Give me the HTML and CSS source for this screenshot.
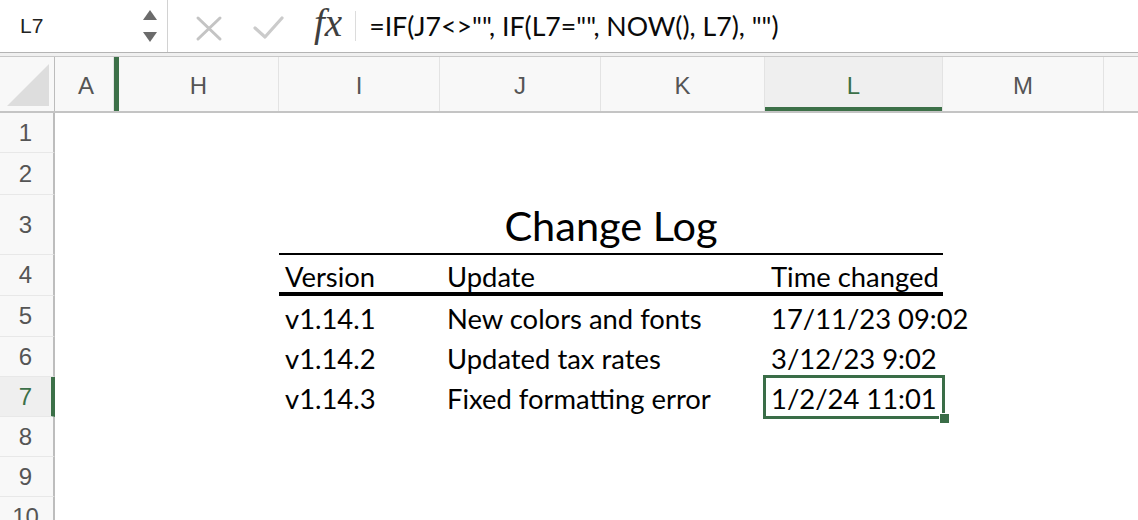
FILE: index.html
```html
<!DOCTYPE html>
<html>
<head>
<meta charset="utf-8">
<link rel="stylesheet" href="styles.css">
</head>
<body>
<div class="app">
  <div class="fbar">
    <div class="namebox">
      <span class="ref">L7</span>
      <svg class="spin" width="16" height="36" viewBox="0 0 16 36">
        <polygon points="1,12 8,2 15,12" fill="#6b6b6b"/>
        <polygon points="1,24 15,24 8,34" fill="#6b6b6b"/>
      </svg>
    </div>
    <svg class="btns" width="132" height="52" viewBox="0 0 132 52">
      <path d="M30 18 L52 39 M52 18 L30 39" stroke="#c4c4c4" stroke-width="3" fill="none" stroke-linecap="round"/>
      <path d="M87 28 L97 37 L114 18" stroke="#cbcbcb" stroke-width="3.2" fill="none" stroke-linecap="round" stroke-linejoin="round"/>
    </svg>
    <span class="fx">fx</span>
    <span class="sep"></span>
    <div class="formula">=IF(J7&lt;&gt;"", IF(L7="", NOW(), L7), "")</div>
  </div>
  <div class="fgap"></div>
  <div class="grid colhead">
    <div class="corner"><span class="tri"></span></div>
    <div class="ch">A</div>
    <div class="hidmark"></div>
    <div class="ch">H</div>
    <div class="ch">I</div>
    <div class="ch">J</div>
    <div class="ch">K</div>
    <div class="ch sel">L</div>
    <div class="ch">M</div>
    <div class="ch last"></div>
  </div>
  <div class="sheet">
    <div class="grid row h40"><div class="rh">1</div></div>
    <div class="grid row h42"><div class="rh">2</div></div>
    <div class="grid row h60"><div class="rh">3</div><div class="title">Change Log</div></div>
    <div class="grid row h41">
      <div class="rh">4</div>
      <div class="cell hd ci">Version</div>
      <div class="cell hd cj">Update</div>
      <div class="cell hd ck"></div>
      <div class="cell hd cl">Time changed</div>
    </div>
    <div class="grid row h41">
      <div class="rh">5</div>
      <div class="cell ci">v1.14.1</div>
      <div class="cell cj">New colors and fonts</div>
      <div class="cell cl">17/11/23 09:02</div>
    </div>
    <div class="grid row h40">
      <div class="rh">6</div>
      <div class="cell ci">v1.14.2</div>
      <div class="cell cj">Updated tax rates</div>
      <div class="cell cl">3/12/23 9:02</div>
    </div>
    <div class="grid row h40">
      <div class="rh selr">7</div>
      <div class="cell ci">v1.14.3</div>
      <div class="cell cj">Fixed formatting error</div>
      <div class="cell cl active">1/2/24 11:01<span class="handle"></span></div>
    </div>
    <div class="grid row h40"><div class="rh">8</div></div>
    <div class="grid row h40"><div class="rh">9</div></div>
    <div class="grid row h40"><div class="rh">10</div></div>
  </div>
</div>
</body>
</html>
```
FILE: styles.css
```css
html, body {
  margin: 0;
  padding: 0;
  background: #ffffff;
}
body {
  font-family: "Liberation Sans", Arial, sans-serif;
}
.app {
  width: 1138px;
  height: 520px;
  overflow: hidden;
  background: #ffffff;
}
.fbar {
  display: flex;
  align-items: center;
  height: 52px;
  border-bottom: 1px solid #b4b4b4;
}
.namebox {
  box-sizing: border-box;
  width: 168px;
  height: 52px;
  border-right: 1px solid #d2d2d2;
  display: flex;
  align-items: center;
  justify-content: space-between;
  padding-left: 20px;
  padding-right: 9px;
}
.ref {
  font-size: 21px;
  color: #222222;
}
.spin {
  display: block;
}
.btns {
  display: block;
  flex: none;
}
.fx {
  font-family: "Liberation Serif", "Times New Roman", serif;
  font-style: italic;
  font-size: 39px;
  color: #3f3f3f;
  margin-left: 14px;
  line-height: 1;
  margin-top: -7px;
}
.sep {
  width: 1px;
  height: 30px;
  background: #dcdcdc;
  margin-left: 13px;
}
.formula {
  margin-left: 13px;
  font-family: Lato, "Open Sans", sans-serif;
  font-size: 26.7px;
  color: #0a0a0a;
  white-space: nowrap;
}
.fgap {
  height: 3px;
  background: #f0f0f0;
}
.grid {
  display: grid;
  grid-template-columns: 55px 59px 5px 160px 161px 161px 164px 178px 161px 1fr;
}
.colhead {
  height: 54px;
  border-top: 1px solid #c8c8c8;
  border-bottom: 2px solid #c4c4c4;
  background: #f8f8f8;
}
.corner {
  border-right: 1px solid #bcbcbc;
  position: relative;
}
.tri {
  position: absolute;
  right: 5px;
  bottom: 5px;
  width: 42px;
  height: 42px;
  background: #dddddd;
  clip-path: polygon(100% 0, 100% 100%, 0 100%);
}
.ch {
  display: flex;
  align-items: center;
  justify-content: center;
  border-right: 1px solid #e3e3e3;
  font-size: 24px;
  color: #555555;
  padding-top: 4px;
}
.ch:nth-child(2) {
  padding-left: 4px;
}
.ch.last {
  border-right: none;
}
.ch.sel {
  background: #efefef;
  color: #3c7048;
  box-shadow: inset 0 -4px 0 #3c7048;
}
.hidmark {
  background: #3c7048;
}
.row {
  box-sizing: border-box;
}
.h40 { height: 40px; }
.h41 { height: 41px; }
.h42 { height: 42px; }
.h60 { height: 60px; }
.rh {
  grid-column: 1;
  display: flex;
  align-items: center;
  justify-content: center;
  background: #f8f8f8;
  border-right: 2px solid #bdbdbd;
  border-bottom: 1px solid #e8e8e8;
  font-size: 24px;
  color: #555555;
  padding-right: 2px;
}
.rh.selr {
  background: #efefef;
  color: #3c7048;
  border-right: 4px solid #3c7048;
  padding-right: 0;
}
.title {
  grid-column: 5 / 9;
  border-bottom: 2px solid #000000;
  text-align: center;
  font-family: Lato, "Open Sans", sans-serif;
  font-size: 41.5px;
  color: #000000;
  display: flex;
  align-items: flex-end;
  justify-content: center;
  line-height: 1;
  padding-bottom: 7px;
}
.cell {
  font-family: Lato, "Open Sans", sans-serif;
  font-size: 27.4px;
  color: #000000;
  white-space: nowrap;
  display: flex;
  align-items: flex-end;
  line-height: 1;
  padding-left: 6px;
  padding-bottom: 5px;
  box-sizing: border-box;
}
.cell.hd {
  border-bottom: 4px solid #000000;
  padding-bottom: 2px;
}
.ci { grid-column: 5; }
.cj { grid-column: 6; padding-left: 7px; }
.ck { grid-column: 7; }
.cl { grid-column: 8; padding-left: 6px; }
.active {
  position: relative;
  outline: 3px solid #3a6d47;
  outline-offset: -1px;
}
.handle {
  position: absolute;
  right: -7px;
  bottom: -7px;
  width: 9px;
  height: 9px;
  background: #3a6d47;
  border: 1px solid #ffffff;
}
```
